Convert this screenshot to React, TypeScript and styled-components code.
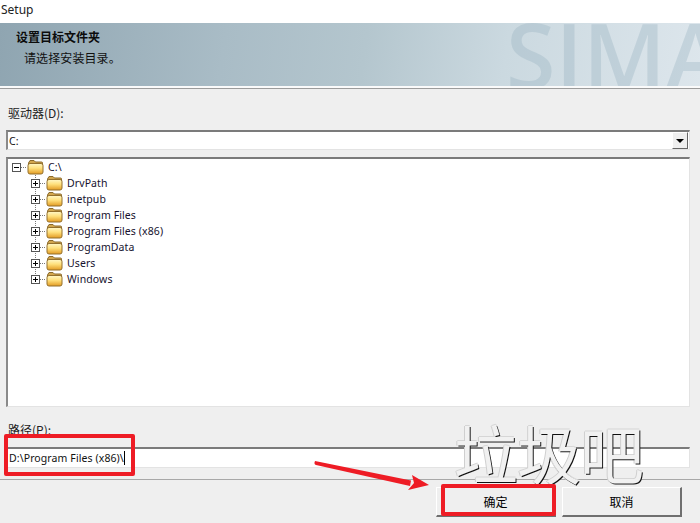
import styled, { createGlobalStyle } from "styled-components";

const UI_FONT = `"Noto Sans", "Noto Sans CJK SC", sans-serif`;
const CJK_FONT = `"Noto Sans CJK SC", "Noto Sans", sans-serif`;

const GlobalStyle = createGlobalStyle`
    html, body {
        margin: 0;
        padding: 0;
        background: #efefef;
    }
`;

const Window = styled.div`
    position: relative;
    width: 700px;
    height: 523px;
    overflow: hidden;
    background: #efefef;
    font-family: ${UI_FONT};
    color: #111;
`;

const TitleBar = styled.div`
    height: 23px;
    background: #fff;
    padding-left: 1px;
    font-size: 12px;
    line-height: 20px;
    color: #222;
`;

const Banner = styled.div`
    position: relative;
    height: 63px;
    overflow: hidden;
    padding: 5px 0 0 16px;
    box-sizing: border-box;
    background: linear-gradient(98deg, #8fa5b1 0%, #a9bcc6 32%, #b4c6ce 52%, #cbd9e0 72%, #dde6ec 100%);
`;

const BannerTitle = styled.div`
    position: relative;
    font-family: ${CJK_FONT};
    font-weight: 700;
    font-size: 12px;
    line-height: 18px;
    color: #0c0c0c;
`;

const BannerText = styled.div`
    position: relative;
    font-family: ${CJK_FONT};
    font-size: 12px;
    line-height: 18px;
    margin: 3px 0 0 8px;
    letter-spacing: 0.1px;
    color: #111;
`;

const BannerMark = styled.div`
    position: absolute;
    left: 506px;
    top: -30px;
    font-family: "Open Sans", sans-serif;
    font-weight: 600;
    font-size: 90px;
    line-height: 122px;
    white-space: nowrap;
    color: rgba(150, 175, 190, 0.34);
`;

const BannerRule = styled.div`
    height: 3px;
    background: #fafafa;
    border-bottom: 1px solid #9c9c9c;
    box-sizing: border-box;
`;

const Body = styled.div`
    padding: 0 10px 0 6px;
`;

const FieldLabel = styled.div<{ $top: number }>`
    margin-top: ${p => p.$top}px;
    padding-left: 2px;
    height: 18px;
    font-family: ${CJK_FONT};
    font-size: 12px;
    line-height: 18px;
    color: #222;
`;

const Sunken = styled.div<{ $height: number }>`
    height: ${p => p.$height}px;
    box-sizing: border-box;
    background: #fff;
    border-top: 2px solid #7b7b7b;
    border-left: 2px solid #8a8a8a;
    border-right: 1px solid #e3e3e3;
    border-bottom: 1px solid #e3e3e3;
`;

const Combo = styled(Sunken)`
    display: flex;
    align-items: center;
    justify-content: space-between;
    padding: 0 1px 0 1px;
    margin-top: 8px;
    font-size: 10.5px;
`;

const ComboButton = styled.div`
    width: 16px;
    height: 17px;
    box-sizing: border-box;
    background: #efefef;
    border-top: 1px solid #fff;
    border-left: 1px solid #fff;
    border-right: 1px solid #666;
    border-bottom: 1px solid #666;
    display: flex;
    align-items: center;
    justify-content: center;
`;

const ComboArrow = styled.div`
    width: 0;
    height: 0;
    border-left: 4px solid transparent;
    border-right: 4px solid transparent;
    border-top: 4px solid #000;
`;

const Tree = styled(Sunken)`
    margin-top: 7px;
`;

const TreeRow = styled.div<{ $child?: boolean }>`
    display: flex;
    align-items: center;
    height: 16px;
    padding-left: ${p => (p.$child ? 22 : 3)}px;
    font-size: 10.5px;
    letter-spacing: 0.1px;
    color: #16122e;
`;

const RowGlyph = styled.svg`
    flex: none;
`;

const RowLabel = styled.span`
    margin-left: 4px;
    white-space: nowrap;
`;

const PathInput = styled(Sunken)`
    display: flex;
    align-items: center;
    margin-top: 8px;
    padding-left: 1px;
    font-size: 10.5px;
    letter-spacing: 0.1px;
    white-space: nowrap;
`;

const Caret = styled.span`
    display: inline-block;
    width: 1px;
    height: 14px;
    background: #000;
`;

const Footer = styled.div`
    margin-top: 11px;
    height: 44px;
    border-top: 1px solid #a8a8a8;
    box-sizing: border-box;
    display: flex;
    justify-content: flex-end;
    gap: 6px;
    padding: 7px 18px 0 0;
`;

const Button = styled.div`
    width: 120px;
    height: 30px;
    box-sizing: border-box;
    background: #efefef;
    border-top: 1px solid #fff;
    border-left: 1px solid #fff;
    border-right: 2px solid #6f6f6f;
    border-bottom: 2px solid #6f6f6f;
    display: flex;
    align-items: center;
    justify-content: center;
    font-family: ${CJK_FONT};
    font-size: 12px;
    color: #000;
`;

const Highlight = styled.div<{ $x: number; $y: number; $w: number; $h: number }>`
    position: absolute;
    left: ${p => p.$x}px;
    top: ${p => p.$y}px;
    width: ${p => p.$w}px;
    height: ${p => p.$h}px;
    box-sizing: border-box;
    border: 4px solid #ee1c25;
    border-radius: 2px;
`;

const Arrow = styled.svg`
    position: absolute;
    left: 310px;
    top: 455px;
`;

const Watermark = styled.div`
    position: absolute;
    left: 454px;
    top: 413px;
    font-family: ${CJK_FONT};
    font-size: 64px;
    line-height: 76px;
    letter-spacing: -1px;
    white-space: nowrap;
    color: #f1f1f1;
    text-shadow: 1px 1px 0 #111, -1px 0 0 #cfcfcf, 0 -1px 0 #d6d6d6;
`;

const Expander = ({ open, child, last }: { open?: boolean; child?: boolean; last?: boolean }) => (
    <RowGlyph width="16" height="16" viewBox="0 0 16 16">
        {child && (
            <line x1="5.5" y1="0" x2="5.5" y2={last ? 8 : 16} stroke="#777" strokeDasharray="1 1" />
        )}
        <line x1="10" y1="8.5" x2="16" y2="8.5" stroke="#777" strokeDasharray="1 1" />
        <rect x="1.5" y="4.5" width="8" height="8" fill="#fff" stroke="#555" />
        <line x1="3" y1="8.5" x2="8" y2="8.5" stroke="#000" />
        {!open && <line x1="5.5" y1="6" x2="5.5" y2="11" stroke="#000" />}
    </RowGlyph>
);

const Folder = () => (
    <RowGlyph width="17" height="16" viewBox="0 0 17 16">
        <defs>
            <linearGradient id="folderFill" x1="0" y1="0" x2="0" y2="1">
                <stop offset="0" stopColor="#fff8c8" />
                <stop offset="0.45" stopColor="#ffe07c" />
                <stop offset="1" stopColor="#e29a22" />
            </linearGradient>
        </defs>
        <path d="M1.5 4 L3 1.5 H7 L8.5 3 H14.5 Q15.5 3 15.5 4 V7 H1.5 Z" fill="#d2a64e" stroke="#8a6a2c" />
        <path d="M1 6.5 Q1 4.5 3 4.5 H14 Q16 4.5 16 6.5 V13 Q16 15 14 15 H3 Q1 15 1 13 Z" fill="url(#folderFill)" stroke="#94702c" />
    </RowGlyph>
);

const FOLDERS = ["DrvPath", "inetpub", "Program Files", "Program Files (x86)", "ProgramData", "Users", "Windows"];

const App = () => {
    return (
        <Window>
            <GlobalStyle />
            <TitleBar>Setup</TitleBar>
            <Banner>
                <BannerMark>SIMA</BannerMark>
                <BannerTitle>设置目标文件夹</BannerTitle>
                <BannerText>请选择安装目录。</BannerText>
            </Banner>
            <BannerRule />
            <Body>
                <FieldLabel $top={15}>驱动器(D):</FieldLabel>
                <Combo $height={20}>
                    C:
                    <ComboButton>
                        <ComboArrow />
                    </ComboButton>
                </Combo>
                <Tree $height={250}>
                    <TreeRow>
                        <Expander open />
                        <Folder />
                        <RowLabel>C:\</RowLabel>
                    </TreeRow>
                    {FOLDERS.map((name, i) => (
                        <TreeRow key={name} $child>
                            <Expander child last={i === FOLDERS.length - 1} />
                            <Folder />
                            <RowLabel>{name}</RowLabel>
                        </TreeRow>
                    ))}
                </Tree>
                <FieldLabel $top={14}>路径(P):</FieldLabel>
                <PathInput $height={21}>
                    D:\Program Files (x86)\<Caret />
                </PathInput>
            </Body>
            <Footer>
                <Button>确定</Button>
                <Button>取消</Button>
            </Footer>

            <Watermark>垃圾吧</Watermark>
            <Highlight $x={4} $y={434} $w={131} $h={42} />
            <Highlight $x={441} $y={484} $w={115} $h={32} />
            <Arrow width="125" height="40" viewBox="0 0 125 40">
                <path d="M5 6 Q3.5 9 6 10 L100 31 L101 25.5 Z" fill="#ee1c25" />
                <path d="M102 20 L119 30 L98 35 L104 28 Z" fill="#ee1c25" />
            </Arrow>
        </Window>
    );
};

export default App;
